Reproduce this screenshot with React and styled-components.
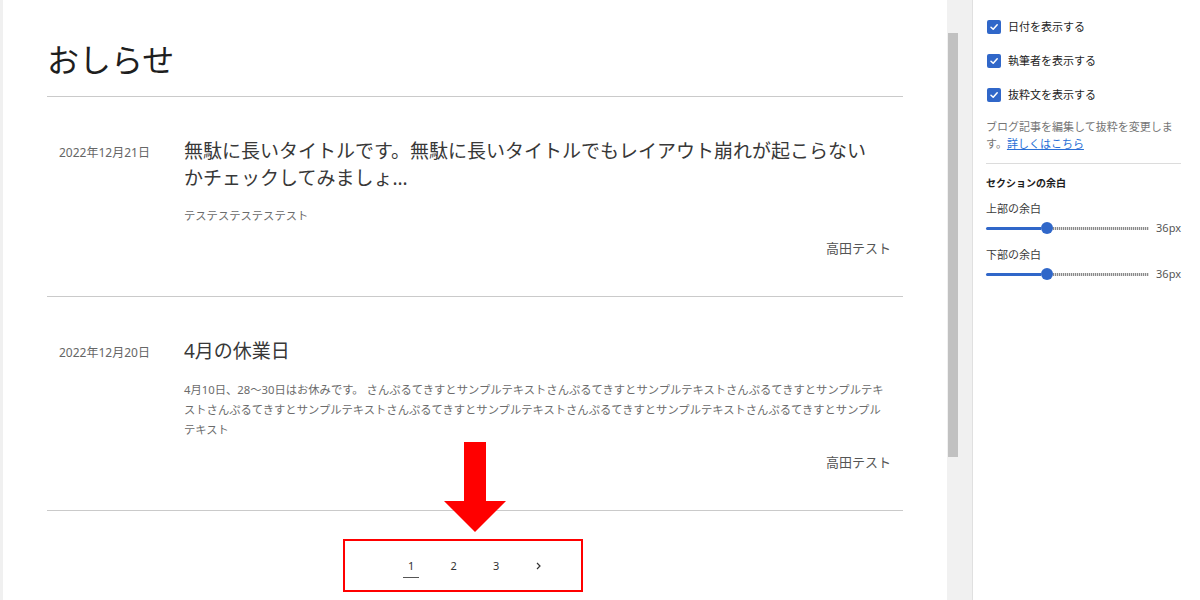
import React from 'react';
import styled, {createGlobalStyle} from 'styled-components';

const GlobalStyle = createGlobalStyle`
  html, body {
    margin: 0;
    height: 100%;
  }
  body {
    font-family: "Noto Sans", "Noto Sans CJK JP", sans-serif;
    background: #fff;
    overflow: hidden;
  }
  #root {
    height: 100%;
  }
`;

const BLUE = '#3067c9';

const posts = [
  {
    date: '2022年12月21日',
    title: '無駄に長いタイトルです。無駄に長いタイトルでもレイアウト崩れが起こらないかチェックしてみましょ...',
    excerpt: 'テステステステステスト',
    author: '高田テスト',
  },
  {
    date: '2022年12月20日',
    title: '4月の休業日',
    excerpt: '4月10日、28〜30日はお休みです。 ' + 'さんぷるてきすとサンプルテキスト'.repeat(7),
    author: '高田テスト',
  },
];

const Shell = styled.div`
  position: relative;
  display: flex;
  height: 600px;
  width: 1200px;
`;

const Canvas = styled.main`
  flex: none;
  width: 947px;
  box-sizing: border-box;
  border-left: 3px solid #f0f0f0;
  padding: 38px 44px 0;
  background: #fff;
`;

const PageTitle = styled.h1`
  margin: 0 0 14px;
  font-size: 32px;
  line-height: 44px;
  font-weight: 400;
  color: #1e1e1e;
`;

const Rule = styled.hr`
  margin: 0;
  border: none;
  height: 1px;
  background: #cacaca;
`;

const Post = styled.article`
  display: flex;
  padding: 41px 12px 38px;
`;

const PostDate = styled.div`
  flex: none;
  width: 125px;
  padding-top: 1.5px;
  font-size: 12px;
  line-height: 26.6px;
  color: #666;
`;

const PostBody = styled.div`
  flex: 1;
  min-width: 0;
`;

const PostTitle = styled.h2`
  margin: 0;
  padding-right: 12px;
  font-size: 19px;
  line-height: 1.4;
  font-weight: 400;
  color: #383838;
`;

const Excerpt = styled.p`
  margin: 15px 0 0;
  font-size: 11.3px;
  line-height: 20px;
  color: #6b6b6b;
`;

const Author = styled.div`
  margin-top: 12px;
  text-align: right;
  font-size: 13px;
  line-height: 20px;
  color: #555;
`;

const Pagination = styled.nav`
  display: flex;
  justify-content: center;
  gap: 26.5px;
  padding-top: 47px;
`;

const PageItem = styled.span`
  display: flex;
  justify-content: center;
  align-items: center;
  width: 16px;
  height: 16px;
  padding-bottom: 3px;
  font-size: 11px;
  color: #333;
  border-bottom: 1px solid ${p => (p.$current ? '#555' : 'transparent')};
`;

const ScrollTrack = styled.div`
  flex: none;
  width: 13px;
  box-sizing: border-box;
  padding: 33px 2px 0 1px;
  background: #f1f1f1;
`;

const ScrollThumb = styled.div`
  height: 424px;
  background: #c1c1c1;
`;

const Gutter = styled.div`
  flex: none;
  width: 12px;
  background: #f0f0f0;
  border-right: 1px solid #e0e0e0;
`;

const Sidebar = styled.aside`
  flex: none;
  width: 227px;
  box-sizing: border-box;
  padding: 20px 19px 0 13px;
  font-size: 11px;
  color: #1e1e1e;
`;

const CheckRow = styled.label`
  display: flex;
  align-items: center;
  gap: 7px;
  height: 14px;
  margin-bottom: ${p => (p.$last ? '17px' : '20px')};
  line-height: 14px;
`;

const Box = styled.span`
  display: flex;
  align-items: center;
  justify-content: center;
  width: 14px;
  height: 14px;
  margin-left: 1px;
  border-radius: 2px;
  background: ${BLUE};
`;

const Help = styled.p`
  margin: 0;
  line-height: 16.5px;
  color: #757575;
`;

const HelpLink = styled.a`
  color: #2a6fd6;
  text-decoration: underline;
`;

const SideRule = styled.div`
  height: 1px;
  margin: 11px 0 12px;
  background: #dcdcdc;
`;

const SectionTitle = styled.h3`
  margin: 0 0 11px;
  font-size: 10px;
  line-height: 14px;
  font-weight: 700;
  color: #1e1e1e;
`;

const FieldLabel = styled.div`
  line-height: 16px;
  color: #3c3c3c;
`;

const SliderRow = styled.div`
  display: flex;
  align-items: center;
  gap: 7px;
  height: 12px;
  margin: 5px 0 13px;
`;

const Slider = styled.div`
  flex: 1;
  display: flex;
  align-items: center;
`;

const SliderFill = styled.div`
  width: 55px;
  height: 3px;
  border-radius: 2px 0 0 2px;
  background: ${BLUE};
`;

const SliderThumb = styled.div`
  width: 12px;
  height: 12px;
  border-radius: 50%;
  background: ${BLUE};
`;

const SliderRail = styled.div`
  flex: 1;
  height: 3px;
  background: repeating-linear-gradient(90deg, #8a8a8a 0 1px, #dedede 1px 2px);
`;

const SliderValue = styled.span`
  line-height: 12px;
  color: #555;
`;

const Arrow = styled.svg`
  position: absolute;
  left: 444px;
  top: 442px;
`;

const Highlight = styled.div`
  position: absolute;
  left: 343px;
  top: 539px;
  width: 240px;
  height: 53px;
  box-sizing: border-box;
  border: 2px solid #f00;
`;

const Checkbox = ({children, last}) => (
  <CheckRow $last={last}>
    <Box>
      <svg width="10" height="10" viewBox="0 0 10 10">
        <path d="M2 5.2 L4.2 7.3 L8.2 2.8" fill="none" stroke="#fff" strokeWidth="1.5" strokeLinecap="round" strokeLinejoin="round" />
      </svg>
    </Box>
    {children}
  </CheckRow>
);

const SpacingSlider = ({label}) => (
  <>
    <FieldLabel>{label}</FieldLabel>
    <SliderRow>
      <Slider>
        <SliderFill />
        <SliderThumb />
        <SliderRail />
      </Slider>
      <SliderValue>36px</SliderValue>
    </SliderRow>
  </>
);

const App = () => {
  return (
    <Shell>
      <GlobalStyle />
      <Canvas>
        <PageTitle>おしらせ</PageTitle>
        <Rule />
        {posts.map(post => (
          <React.Fragment key={post.date}>
            <Post>
              <PostDate>{post.date}</PostDate>
              <PostBody>
                <PostTitle>{post.title}</PostTitle>
                <Excerpt>{post.excerpt}</Excerpt>
                <Author>{post.author}</Author>
              </PostBody>
            </Post>
            <Rule />
          </React.Fragment>
        ))}
        <Pagination>
          <PageItem $current>1</PageItem>
          <PageItem>2</PageItem>
          <PageItem>3</PageItem>
          <PageItem>
            <svg width="5" height="8" viewBox="0 0 5 8">
              <path d="M1 1 L4 4 L1 7" fill="none" stroke="#333" strokeWidth="1.2" />
            </svg>
          </PageItem>
        </Pagination>
      </Canvas>
      <ScrollTrack>
        <ScrollThumb />
      </ScrollTrack>
      <Gutter />
      <Sidebar>
        <Checkbox>日付を表示する</Checkbox>
        <Checkbox>執筆者を表示する</Checkbox>
        <Checkbox last>抜粋文を表示する</Checkbox>
        <Help>
          ブログ記事を編集して抜粋を変更します。<HelpLink href="#">詳しくはこちら</HelpLink>
        </Help>
        <SideRule />
        <SectionTitle>セクションの余白</SectionTitle>
        <SpacingSlider label="上部の余白" />
        <SpacingSlider label="下部の余白" />
      </Sidebar>
      <Arrow width="62" height="90" viewBox="0 0 62 90">
        <polygon points="20,0 42,0 42,59 62,59 31,90 0,59 20,59" fill="#f00" />
      </Arrow>
      <Highlight />
    </Shell>
  );
};

export default App;
